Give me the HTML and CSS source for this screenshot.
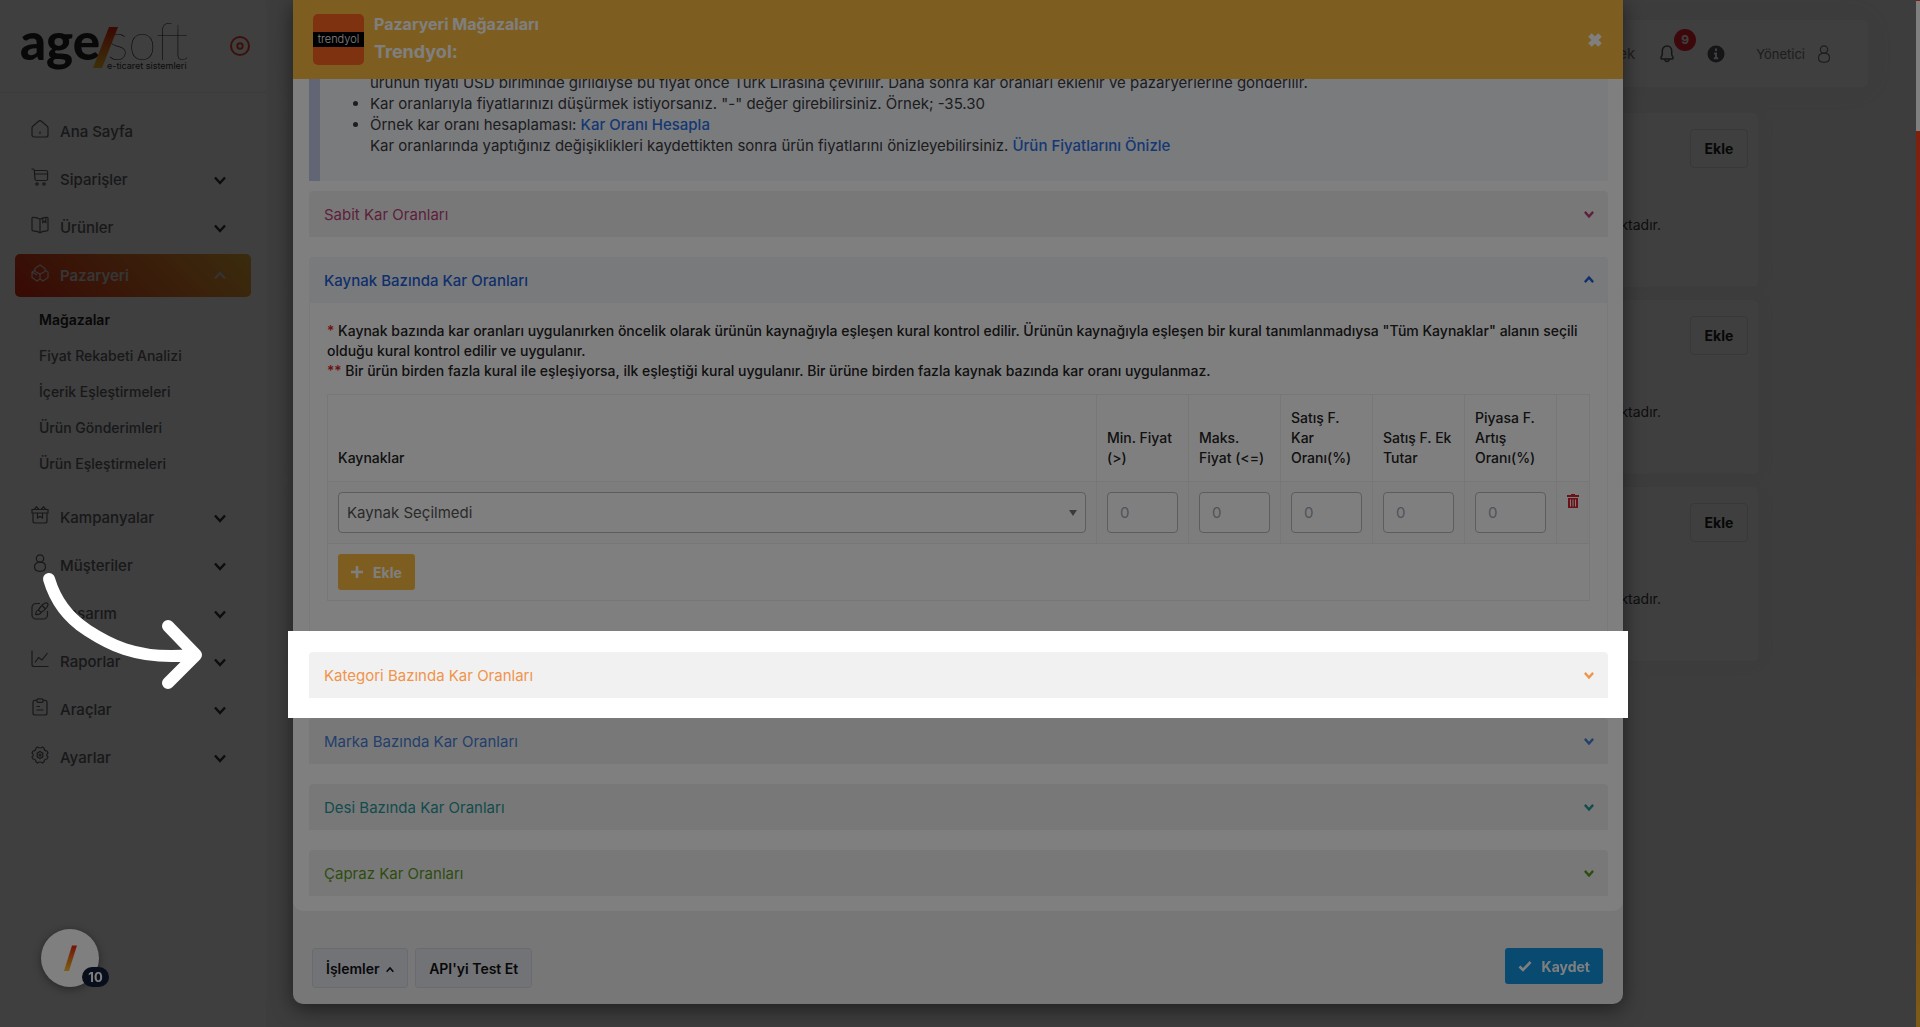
FILE: index.html
```html
<!DOCTYPE html>
<html lang="tr">
<head>
    <meta charset="utf-8">
    <title>Pazaryeri Mağazaları</title>
    <link rel="stylesheet" href="styles.css">
</head>
<body>
    <!-- shared icons -->
    <svg class="sprite" width="0" height="0">
        <defs>
            <linearGradient id="slash" x1="0" y1="0" x2="0" y2="1">
                <stop offset="0" stop-color="#e8260c"/>
                <stop offset="1" stop-color="#f7c02c"/>
            </linearGradient>
            <symbol id="chev" viewBox="0 0 12 12"><path d="M1 3.500 6 9l5-5.500"/></symbol>
            <symbol id="user" viewBox="0 0 18 18"><circle cx="9" cy="4.500" r="3.700"/><path d="M9 8.200c-3.600 0-5.500 1.800-5.500 4.500S5.400 17.300 9 17.300s5.500-1.900 5.500-4.600S12.600 8.200 9 8.200z"/></symbol>
        </defs>
    </svg>

    <div class="page">
        <aside class="sidebar">
            <div class="brand">
                <svg class="logo" viewBox="0 -10 172 72" width="172" height="72">
                    <text class="logo-age" x="0" y="40">age</text>
                    <text class="logo-soft" x="87" y="40">soft</text>
                    <path d="M89 7h9L82 48h-9z" fill="url(#slash)"/>
                    <text class="logo-sub" x="87" y="49">e-ticaret sistemleri</text>
                </svg>
                <svg class="target" viewBox="0 0 20 20" width="20" height="20"><circle cx="10" cy="10" r="9"/><circle cx="10" cy="10" r="2.700"/></svg>
            </div>
            <nav class="menu">
                <a class="item" href="#">
                    <svg class="icon" viewBox="0 0 18 18"><path d="M1 8Q1 6.800 2 6L7.600 1.300a2 2 0 0 1 2.800 0L16 6q1 .8 1 2v7a2 2 0 0 1-2 2H3a2 2 0 0 1-2-2zM9 11.500v2.500"/></svg>
                    <span>Ana Sayfa</span>
                </a>
                <a class="item" href="#">
                    <svg class="icon" viewBox="0 0 18 18"><path d="M.5 1h1.500q1.200 0 1.300 1.200l.7 8.800q.1 1.500 1.500 1.500h9.500q1.500 0 1.600-1.500V4q0-1.500-1.500-1.500H3.300M4 6h12.500"/><circle cx="6" cy="16" r="1.200"/><circle cx="13" cy="16" r="1.200"/></svg>
                    <span>Siparişler</span>
                    <svg class="chev"><use href="#chev"/></svg>
                </a>
                <a class="item" href="#">
                    <svg class="icon" viewBox="0 0 18 18"><path d="M9 3.200C6.500 1.400 4 1.200 1.800 1.300Q1 1.400 1 2.300v11.500q0 1 1 1c3 0 5 .5 7 2 2-1.500 4-2 7-2q1 0 1-1V2.300q0-.9-.8-1C14 1.200 11.500 1.400 9 3.200zv13.500M11.800 2v4.500l1.500-1.200 1.500 1.200V1.500"/></svg>
                    <span>Ürünler</span>
                    <svg class="chev"><use href="#chev"/></svg>
                </a>
                <a class="item active" href="#">
                    <svg class="icon" viewBox="0 0 18 18"><path d="M4 4.500 9 1l5 3.500v3L9 10 4 7.500zM4 6 1 8v5.500L6 17l3-2 3 2 5-3.500V8l-3-2M9 10v5M1 8l5 3"/></svg>
                    <span>Pazaryeri</span>
                    <svg class="chev up"><use href="#chev"/></svg>
                </a>
                <div class="submenu">
                    <a class="current" href="#">Mağazalar</a>
                    <a href="#">Fiyat Rekabeti Analizi</a>
                    <a href="#">İçerik Eşleştirmeleri</a>
                    <a href="#">Ürün Gönderimleri</a>
                    <a href="#">Ürün Eşleştirmeleri</a>
                </div>
                <a class="item" href="#">
                    <svg class="icon" viewBox="0 0 18 18"><path d="M2 7v8a2 2 0 0 0 2 2h10a2 2 0 0 0 2-2V7M1 3.500h16V7H1zM3 3.500 5.500.8 8 3.500M10 3.500 12.500.8 15 3.500M6.500 7v5L9 10.500l2.500 1.500V7"/></svg>
                    <span>Kampanyalar</span>
                    <svg class="chev"><use href="#chev"/></svg>
                </a>
                <a class="item" href="#">
                    <svg class="icon"><use href="#user"/></svg>
                    <span>Müşteriler</span>
                    <svg class="chev"><use href="#chev"/></svg>
                </a>
                <a class="item" href="#">
                    <svg class="icon" viewBox="0 0 18 18"><path d="M9 1.500H5a4 4 0 0 0-4 4V13a4 4 0 0 0 4 4h7.500a4 4 0 0 0 4-4V9M15 .9c-2 .3-5.500 3.800-7.500 7L10 10.500C13 8.500 16.800 5 17 2.800 17.200 1.500 16.300.8 15 .9zM7.500 8c-2 .2-2.600 1.500-2.800 4.500C7.500 12.700 9.500 12.500 10 10.500M11.500 4 14 6.500"/></svg>
                    <span>Tasarım</span>
                    <svg class="chev"><use href="#chev"/></svg>
                </a>
                <a class="item" href="#">
                    <svg class="icon" viewBox="0 0 18 18"><path d="M1 .5v14q0 2 2 2h14.500M4 12.500l3.500-5 3.500 2.500 5.500-7"/></svg>
                    <span>Raporlar</span>
                    <svg class="chev"><use href="#chev"/></svg>
                </a>
                <a class="item" href="#">
                    <svg class="icon" viewBox="0 0 18 18"><path d="M6 2.300H4a2 2 0 0 0-2 2V15a2 2 0 0 0 2 2h10a2 2 0 0 0 2-2V4.300a2 2 0 0 0-2-2h-2M7 .8h4a1 1 0 0 1 1 1v1.500a1 1 0 0 1-1 1H7a1 1 0 0 1-1-1V1.800a1 1 0 0 1 1-1zM5.500 8.500H9M5.500 12h7"/></svg>
                    <span>Araçlar</span>
                    <svg class="chev"><use href="#chev"/></svg>
                </a>
                <a class="item" href="#">
                    <svg class="icon" viewBox="0 0 18 18"><path d="M6.500 1Q9 3 11.500 1l1.500 1q0 3 3 3l1 2q-2.500 2 0 4l-1 2q-3 0-3 3l-1.500 1Q9 15 6.500 17L5 16q0-3-3-3l-1-2q2.500-2 0-4l1-2q3 0 3-3z"/><path d="m9 5.500 2.800 1.700v3.600L9 12.500l-2.800-1.700V7.200z"/><circle cx="9" cy="9" r="1"/></svg>
                    <span>Ayarlar</span>
                    <svg class="chev"><use href="#chev"/></svg>
                </a>
            </nav>
        </aside>

        <main class="main">
            <header class="topbar">
                <span class="top-link">Destek</span>
                <span class="bell">
                    <svg viewBox="0 0 16 18" width="16" height="18"><path d="M8 1C5 1 3.300 3.200 3.300 6v3.500L2 12.500q-.5 1.600 1 1.600h10q1.500 0 1-1.600l-1.300-3V6C12.700 3.200 11 1 8 1zM6 14.500q0 2 2 2t2-2"/></svg>
                    <b class="count">9</b>
                </span>
                <svg class="info" viewBox="0 0 18 18" width="18" height="18"><circle cx="9" cy="9" r="8.500"/><path d="M9 3.500v2.500M7 8.500h2v4.500M6.800 13.200h4.400"/></svg>
                <span class="account">Yönetici <svg class="icon"><use href="#user"/></svg></span>
            </header>
            <section class="card">
                <button type="button" class="btn-add">Ekle</button>
                <p>bulunmaktadır.</p>
            </section>
            <section class="card">
                <button type="button" class="btn-add">Ekle</button>
                <p>bulunmaktadır.</p>
            </section>
            <section class="card">
                <button type="button" class="btn-add">Ekle</button>
                <p>bulunmaktadır.</p>
            </section>
        </main>
    </div>

    <div class="scrollbar"><div class="thumb"></div></div>

    <div class="chat">
        <svg viewBox="0 0 58 58" width="58" height="58"><path d="M31 16.500h5L28 42h-5z" fill="url(#slash)"/></svg>
        <span class="chat-count">10</span>
    </div>

    <div class="backdrop"></div>

    <div class="modal-wrap">
        <div class="modal">
            <div class="modal-header">
                <div class="store-logo"><span>trendyol</span></div>
                <div class="modal-title">
                    <h4>Pazaryeri Mağazaları</h4>
                    <h3>Trendyol:</h3>
                </div>
                <button type="button" class="close" aria-label="Kapat">
                    <svg viewBox="0 0 16 16" width="16" height="16"><path d="m3 3 10 10M13 3 3 13"/></svg>
                </button>
            </div>

            <div class="modal-body">
                <div class="notice">
                    <ul>
                        <li class="more">ürünün fiyatı USD biriminde girildiyse bu fiyat önce Türk Lirasına çevirilir. Daha sonra kar oranları eklenir ve pazaryerlerine gönderilir.</li>
                        <li>Kar oranlarıyla fiyatlarınızı düşürmek istiyorsanız. "-" değer girebilirsiniz. Örnek; -35.30</li>
                        <li>Örnek kar oranı hesaplaması: <a href="#">Kar Oranı Hesapla</a><br>
                            Kar oranlarında yaptığınız değişiklikleri kaydettikten sonra ürün fiyatlarını önizleyebilirsiniz. <a href="#">Ürün Fiyatlarını Önizle</a></li>
                    </ul>
                </div>

                <div class="accordion">
                    <div class="panel">
                        <button type="button" class="panel-head magenta">Sabit Kar Oranları <svg class="chev"><use href="#chev"/></svg></button>
                    </div>

                    <div class="panel open">
                        <button type="button" class="panel-head blue">Kaynak Bazında Kar Oranları <svg class="chev up"><use href="#chev"/></svg></button>
                        <div class="panel-content">
                            <p><i>*</i> Kaynak bazında kar oranları uygulanırken öncelik olarak ürünün kaynağıyla eşleşen kural kontrol edilir. Ürünün kaynağıyla eşleşen bir kural tanımlanmadıysa "Tüm Kaynaklar" alanın seçili olduğu kural kontrol edilir ve uygulanır.</p>
                            <p><i>**</i> Bir ürün birden fazla kural ile eşleşiyorsa, ilk eşleştiği kural uygulanır. Bir ürüne birden fazla kaynak bazında kar oranı uygulanmaz.</p>
                            <table class="rates">
                                <thead>
                                    <tr>
                                        <th>Kaynaklar</th>
                                        <th class="num">Min. Fiyat (&gt;)</th>
                                        <th class="num">Maks. Fiyat (&lt;=)</th>
                                        <th class="num">Satış F. Kar Oranı(%)</th>
                                        <th class="num">Satış F. Ek Tutar</th>
                                        <th class="num">Piyasa F. Artış Oranı(%)</th>
                                        <th class="del"></th>
                                    </tr>
                                </thead>
                                <tbody>
                                    <tr class="rule">
                                        <td><select aria-label="Kaynaklar"><option>Kaynak Seçilmedi</option></select></td>
                                        <td><input type="text" placeholder="0" aria-label="Min. Fiyat"></td>
                                        <td><input type="text" placeholder="0" aria-label="Maks. Fiyat"></td>
                                        <td><input type="text" placeholder="0" aria-label="Satış F. Kar Oranı"></td>
                                        <td><input type="text" placeholder="0" aria-label="Satış F. Ek Tutar"></td>
                                        <td><input type="text" placeholder="0" aria-label="Piyasa F. Artış Oranı"></td>
                                        <td class="del">
                                            <button type="button" class="trash" aria-label="Sil">
                                                <svg viewBox="0 0 12 14" width="12" height="14"><path d="M4 0h4v1h4v2H0V1h4zM1 4h10v10H1zm2 1.500v7h1v-7zm2.500 0v7h1v-7zm2.500 0v7h1v-7z" fill-rule="evenodd"/></svg>
                                            </button>
                                        </td>
                                    </tr>
                                    <tr>
                                        <td colspan="7">
                                            <button type="button" class="btn-gold"><svg viewBox="0 0 12 12" width="12" height="12"><path d="M6 0v12M0 6h12"/></svg>Ekle</button>
                                        </td>
                                    </tr>
                                </tbody>
                            </table>
                        </div>
                    </div>

                    <div class="panel spotlight">
                        <button type="button" class="panel-head orange">Kategori Bazında Kar Oranları <svg class="chev"><use href="#chev"/></svg></button>
                    </div>
                    <div class="panel">
                        <button type="button" class="panel-head sky">Marka Bazında Kar Oranları <svg class="chev"><use href="#chev"/></svg></button>
                    </div>
                    <div class="panel">
                        <button type="button" class="panel-head teal">Desi Bazında Kar Oranları <svg class="chev"><use href="#chev"/></svg></button>
                    </div>
                    <div class="panel">
                        <button type="button" class="panel-head green">Çapraz Kar Oranları <svg class="chev"><use href="#chev"/></svg></button>
                    </div>
                </div>
            </div>

            <div class="modal-footer">
                <button type="button" class="btn-light">İşlemler <svg class="chev up"><use href="#chev"/></svg></button>
                <button type="button" class="btn-light">API'yi Test Et</button>
                <button type="button" class="btn-save"><svg viewBox="0 0 14 12" width="14" height="12"><path d="m1.500 6.500 3.500 3.500 7.500-8"/></svg>Kaydet</button>
            </div>
        </div>
    </div>

    <svg class="arrow" viewBox="0 0 170 124" width="170" height="124"><path d="M9 12C16 36 30 52 47 63S94 94 152 88M128 59l28 29-28 28"/></svg>
</body>
</html>
```
FILE: styles.css
```css
* {
    box-sizing: border-box;
}
body {
    margin: 0;
    height: 100vh;
    overflow: hidden;
    font-family: Inter, "Open Sans", sans-serif;
    font-size: 15px;
    color: #3a3a3e;
    background: #f4f4f4;
}
a {
    color: inherit;
    text-decoration: none;
}
button {
    font-family: inherit;
    cursor: pointer;
}
.sprite {
    position: absolute;
}
.page {
    display: flex;
    height: 100vh;
}
.icon {
    width: 18px;
    height: 18px;
    fill: none;
    stroke: currentColor;
    stroke-width: 1.2;
}
.chev {
    width: 12px;
    height: 12px;
    fill: none;
    stroke: currentColor;
    stroke-width: 2.4;
}
.chev.up {
    transform: rotate(180deg);
}

/* sidebar */
.sidebar {
    width: 267px;
    flex: none;
    background: #fcfcfc;
    border-right: 1px solid #f4f4f4;
}
.brand {
    display: flex;
    align-items: center;
    justify-content: space-between;
    height: 93px;
    padding: 0 16px 0 20px;
    border-bottom: 1px solid #ebebeb;
}
.logo-age {
    font-family: Lato, sans-serif;
    font-size: 51px;
    font-weight: 900;
    fill: #222;
}
.logo-soft {
    font-family: Lato, sans-serif;
    font-size: 51px;
    font-weight: 100;
    fill: #222;
}
.logo-sub {
    font-size: 9px;
    fill: #333;
}
.target {
    fill: none;
    stroke: #f0442c;
    stroke-width: 2;
}
.menu {
    padding: 17px 15px;
    color: #626268;
}
.item {
    display: flex;
    align-items: center;
    height: 43px;
    margin-bottom: 5px;
    padding: 0 25px 0 16px;
    border-radius: 5px;
    font-size: 15px;
    font-weight: 500;
}
.item span {
    flex: 1;
    margin-left: 11px;
}
.item .icon {
    margin-bottom: 6px;
}
.item .chev {
    color: #333;
}
.item.active {
    color: #d8d8d8;
    font-weight: 600;
    background: linear-gradient(45deg, #e02814, #ecb038);
}
.item.active .chev {
    color: #ccc;
}
.submenu {
    display: flex;
    flex-direction: column;
    padding-bottom: 14px;
}
.submenu a {
    padding-left: 24px;
    font-size: 14px;
    font-weight: 500;
    line-height: 36px;
}
.submenu .current {
    color: #222;
    font-weight: 600;
}

/* page behind the dialog */
.main {
    flex: 1;
    padding: 20px 52px 0 30px;
}
.topbar {
    display: flex;
    align-items: center;
    justify-content: flex-end;
    height: 67px;
    margin-bottom: 26px;
    padding-right: 35px;
    border-radius: 5px;
    background: #fcfcfc;
    box-shadow: 0 0 30px #eee;
    color: #777;
}
.bell {
    position: relative;
    height: 18px;
    margin: 0 32px 0 24px;
}
.bell path {
    fill: none;
    stroke: #555;
    stroke-width: 1.5;
}
.count {
    position: absolute;
    top: -25px;
    left: 15px;
    width: 22px;
    height: 22px;
    border-radius: 50%;
    background: #f5222d;
    color: #fff;
    font-size: 12px;
    line-height: 22px;
    text-align: center;
}
.bell .count {
    top: -16px;
}
.info circle {
    fill: #555560;
}
.info path {
    fill: none;
    stroke: #fff;
    stroke-width: 2;
}
.account {
    display: flex;
    align-items: center;
    gap: 10px;
    margin-left: 31px;
    font-size: 13px;
}
.card {
    display: flex;
    flex-direction: column;
    align-items: flex-end;
    height: 174px;
    margin: 0 110px 13px 0;
    padding: 16px 10px;
    border-radius: 5px;
    background: #fcfcfc;
    box-shadow: 0 0 20px #efefef;
}
.card p {
    margin: 48px 87px 0 0;
    font-size: 14px;
    line-height: 18px;
}
.btn-add {
    width: 58px;
    height: 39px;
    padding: 0;
    border: 1px solid #e2e2e2;
    border-radius: 4px;
    background: #fcfcfc;
    color: #222;
    font-size: 14px;
    font-weight: 700;
}
.scrollbar {
    position: fixed;
    top: 0;
    right: 0;
    bottom: 0;
    z-index: 20;
    width: 4px;
    padding-top: 1px;
    background: linear-gradient(#ff3d1c, #ff4824 35%, #f7b52e);
}
.thumb {
    height: 130px;
    background: #fff;
}
.scrollbar,
.chat {
    z-index: 20;
}
.chat {
    position: fixed;
    left: 41px;
    bottom: 40px;
    width: 58px;
    height: 58px;
    border-radius: 50%;
    background: #fff;
    box-shadow: 0 2px 8px rgba(0, 0, 0, 0.4);
}
.chat-count {
    position: absolute;
    left: 41px;
    bottom: 0;
    width: 27px;
    height: 20px;
    border-radius: 10px;
    background: #101c38;
    color: #fff;
    font-size: 13px;
    font-weight: 700;
    line-height: 20px;
    text-align: center;
}

/* dialog */
.backdrop {
    position: fixed;
    inset: 0;
    z-index: 10;
    background: rgba(0, 0, 0, 0.5);
}
.modal-wrap {
    position: fixed;
    inset: 0;
    z-index: 30;
    display: flex;
    align-items: flex-start;
    justify-content: center;
    padding-right: 4px;
}
.modal {
    width: 100%;
    max-width: 1330px;
    border-radius: 0 0 10px 10px;
    background: #efeff0;
    box-shadow: 0 5px 20px rgba(0, 0, 0, 0.5);
}
.modal-header {
    display: flex;
    align-items: center;
    gap: 10px;
    height: 79px;
    padding: 0 20px;
    background: #fdbc40;
    color: #fff;
}
.store-logo {
    display: flex;
    align-items: center;
    width: 51px;
    height: 51px;
    border-radius: 5px;
    background: #fd6420;
}
.store-logo span {
    width: 51px;
    background: #000;
    font-size: 11px;
    font-weight: 300;
    line-height: 15px;
    text-align: center;
}
.modal-title {
    flex: 1;
}
.modal-title h4 {
    margin: 0;
    font-size: 16px;
    line-height: 24px;
}
.modal-title h3 {
    margin: 0;
    font-size: 18px;
    line-height: 32px;
}
.close {
    display: flex;
    padding: 0;
    border: 0;
    background: none;
}
.close path {
    fill: none;
    stroke: #fff;
    stroke-width: 5;
}
.modal-body {
    padding: 0 15px 15px 16px;
    border-radius: 0 0 10px 10px;
    background: #fff;
}
.notice {
    display: flex;
    align-items: flex-end;
    height: 102px;
    margin-bottom: 10px;
    padding-bottom: 25px;
    border-left: 11px solid #c4cae8;
    background: #f4f6fa;
    overflow: hidden;
}
.notice ul {
    margin: 0;
    padding-left: 50px;
    line-height: 21px;
}
.notice .more {
    list-style: none;
}
.notice a {
    color: #2a6fe8;
    font-weight: 500;
}
.accordion {
    display: flex;
    flex-direction: column;
    gap: 20px;
}
.panel-head {
    display: flex;
    align-items: center;
    justify-content: space-between;
    width: 100%;
    height: 46px;
    padding: 0 14px 0 15px;
    border: 0;
    border-radius: 4px 4px 0 0;
    background: #f1f1f2;
    font-size: 15px;
}
.panel-head .chev {
    width: 10px;
    height: 10px;
    stroke-width: 3;
}
.magenta {
    color: #bc3f78;
}
.blue {
    color: #1e5fd8;
}
.orange {
    color: #f0944a;
}
.sky {
    color: #467fd6;
}
.teal {
    color: #269898;
}
.green {
    color: #5c9a24;
}
.open .panel-head {
    background: #f1f4f8;
    font-weight: 500;
}
.panel-content {
    padding: 18px 17px 30px 17px;
    border: 1px solid #f2f2f2;
    border-top: 0;
    color: #222;
    font-size: 14px;
}
.panel-content p {
    margin: 0;
    font-weight: 500;
    line-height: 20px;
}
.panel-content i {
    color: #e02020;
    font-style: normal;
}
.rates {
    width: 100%;
    margin-top: 13px;
    border-collapse: collapse;
    table-layout: fixed;
}
.rates th,
.rates td {
    padding: 10px;
    border: 1px solid #efefef;
    text-align: left;
    vertical-align: top;
}
.rates th {
    height: 87px;
    padding: 13px 10px;
    font-weight: 500;
    line-height: 20px;
    vertical-align: bottom;
}
.rates .num {
    width: 92px;
}
.rates .del {
    width: 33px;
}
.rule {
    background: #fafafa;
}
.rates select,
.rates input {
    display: block;
    width: 100%;
    height: 41px;
    border: 1px solid #bbb;
    border-radius: 4px;
    background: #fff;
    font-family: inherit;
    font-size: 15px;
    color: #555;
}
.rates input {
    padding: 0 12px;
}
.rates input::placeholder {
    color: #a0a5b5;
}
.rates select {
    appearance: none;
    padding: 0 8px;
}
.rates td:first-child {
    position: relative;
}
.rule td:first-child::after {
    content: "";
    position: absolute;
    right: 19px;
    top: 28px;
    border: 4px solid transparent;
    border-top: 6px solid #777;
    border-bottom: 0;
}
.trash {
    display: block;
    padding: 2px 0;
    border: 0;
    background: none;
    fill: #d8232e;
}
.btn-gold,
.btn-save {
    display: flex;
    align-items: center;
    height: 36px;
    padding: 0 13px;
    border: 0;
    border-radius: 3px;
    background: #fdbc40;
    color: #fff;
    font-size: 14px;
    font-weight: 700;
}
.btn-gold svg,
.btn-save svg {
    margin-right: 10px;
    fill: none;
    stroke: #fff;
    stroke-width: 2.6;
}
.modal-footer {
    display: flex;
    align-items: flex-start;
    gap: 7px;
    padding: 37px 20px 16px 19px;
}
.btn-light {
    height: 40px;
    padding: 0 13px;
    border: 1px solid #d4d7e2;
    border-radius: 3px;
    background: #e4e7ef;
    color: #111;
    font-size: 14px;
    font-weight: 600;
}
.btn-light .chev {
    width: 8px;
    height: 8px;
    margin-left: 3px;
}
.btn-save {
    margin-left: auto;
    background: #1295e2;
}

/* tour step: everything but this panel is dimmed */
.spotlight {
    position: relative;
    z-index: 40;
}
.spotlight::before {
    content: "";
    position: absolute;
    inset: -21px -20px -20px -21px;
    background: #fff;
    box-shadow: 0 0 0 3000px rgba(0, 0, 0, 0.5);
}
.spotlight .panel-head {
    position: relative;
}
.arrow {
    position: fixed;
    top: 567px;
    left: 40px;
    z-index: 50;
    overflow: visible;
}
.arrow path {
    fill: none;
    stroke: #fff;
    stroke-width: 12;
    stroke-linecap: round;
    stroke-linejoin: round;
}
```
